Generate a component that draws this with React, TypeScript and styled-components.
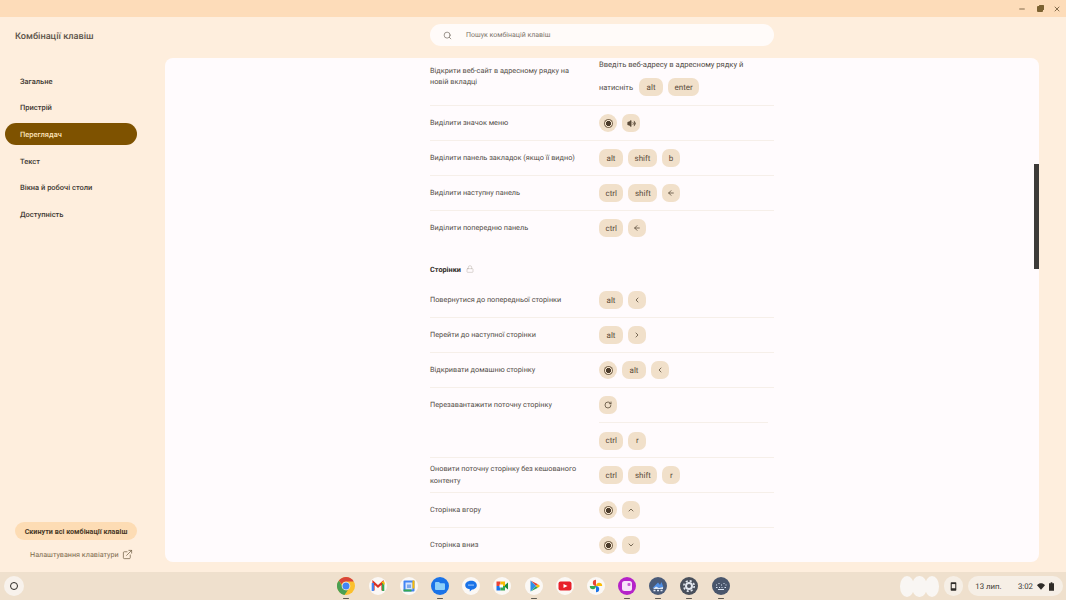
import React from "react";
import styled, { createGlobalStyle } from "styled-components";
import {
  ArrowLeft,
  ChevronDown,
  ChevronLeft,
  ChevronRight,
  ChevronUp,
  ExternalLink,
  Lock,
  RotateCw,
  Search,
  Volume2,
  Minus,
  X,
} from "lucide-react";

const GlobalStyle = createGlobalStyle`
  html, body {
    margin: 0;
    padding: 0;
    background: #feeedd;
  }
  * {
    box-sizing: border-box;
  }
`;

const Screen = styled.div`
  width: 1066px;
  height: 600px;
  display: flex;
  flex-direction: column;
  overflow: hidden;
  font-family: Roboto, "Noto Sans", sans-serif;
  text-rendering: geometricPrecision;
  color: #4d4640;
`;

const TitleBar = styled.div`
  height: 17px;
  flex: none;
  background: #fddcb9;
  display: flex;
  justify-content: flex-end;
  align-items: center;
  gap: 10.5px;
  padding: 1px 5px 0 0;
  color: #6b5536;
`;

const RestoreIcon = styled.div`
  width: 6px;
  height: 6px;
  background: #7c6231;
  border-radius: 1px;
  box-shadow: 1.5px -1.5px 0 -0.5px #7c6231;
`;

const Body = styled.div`
  flex: 1;
  min-height: 0;
  display: flex;
  background: #feeedd;
`;

const Sidebar = styled.aside`
  width: 165px;
  flex: none;
  display: flex;
  flex-direction: column;
  padding-bottom: 12px;
`;

const AppTitle = styled.h1`
  margin: 0;
  height: 38px;
  padding: 13px 0 0 15px;
  font-size: 9.2px;
  line-height: 13px;
  font-weight: 500;
  color: #5c544a;
  white-space: nowrap;
`;

const Nav = styled.nav`
  margin-top: 15px;
  display: flex;
  flex-direction: column;
  gap: 4.7px;
  flex: 1;
  padding-left: 4.5px;
`;

const NavItem = styled.div<{ $active?: boolean }>`
  height: 22px;
  display: flex;
  align-items: center;
  padding-left: 15.5px;
  border-radius: 11px;
  font-size: 7.5px;
  font-weight: 500;
  width: 132px;
  color: ${(props) => (props.$active ? "#fde3b8" : "#3f3a34")};
  background: ${(props) => (props.$active ? "#7e5200" : "transparent")};
`;

const ResetButton = styled.button`
  width: 122px;
  height: 18px;
  margin-left: 15px;
  border: none;
  border-radius: 9px;
  background: #fddcb4;
  font-family: inherit;
  font-size: 7.2px;
  font-weight: 700;
  color: #4a3a28;
  padding: 0;
  white-space: nowrap;
`;

const SettingsLink = styled.div`
  margin-top: 8px;
  margin-left: 30px;
  height: 12px;
  display: flex;
  align-items: center;
  gap: 3px;
  font-size: 7.2px;
  color: #7c6a4c;
  white-space: nowrap;

  svg {
    flex: none;
  }
`;

const Main = styled.main`
  flex: 1;
  min-width: 0;
  display: flex;
  flex-direction: column;
  padding: 0 27px 10px 0;
`;

const SearchRow = styled.div`
  height: 41px;
  flex: none;
  padding: 7px 0 0 265px;
`;

const SearchBox = styled.div`
  width: 344px;
  height: 22px;
  border-radius: 11px;
  background: #fffbf9;
  display: flex;
  align-items: center;
  padding-left: 13px;
  gap: 14px;
  font-size: 7px;
  color: #7d756c;
`;

const Card = styled.section`
  flex: 1;
  min-height: 0;
  position: relative;
  background: #fffbfd;
  border-radius: 8px;
  overflow: hidden;
  padding-left: 265px;
`;

const Content = styled.div`
  width: 344px;
  display: flex;
  flex-direction: column;
`;

const Row = styled.div<{ $height?: number; $noBorder?: boolean }>`
  display: grid;
  grid-template-columns: 169px 1fr;
  align-items: center;
  height: ${(props) => props.$height ?? 35}px;
  border-bottom: 1px solid ${(props) => (props.$noBorder ? "transparent" : "#f6efe9")};
`;

const Label = styled.div`
  font-size: 7.3px;
  line-height: 11.5px;
  color: #524c46;
  margin-top: -1px;
`;

const TopLabel = styled(Label)`
  align-self: start;
  margin-top: 6.5px;
  padding-right: 20px;
`;

const Keys = styled.div`
  display: flex;
  align-items: center;
  gap: 5px;
  font-size: 7.5px;
  color: #524c46;
`;

const Stack = styled.div`
  align-self: start;
  padding-top: 0.5px;
  display: flex;
  flex-direction: column;
  gap: 8.5px;
`;

const Note = styled.div`
  font-size: 7.6px;
  line-height: 11px;
  color: #524c46;
  white-space: nowrap;
`;

const Prompt = styled.span`
  margin-right: 1px;
`;

const Key = styled.span<{ $square?: boolean; $round?: boolean }>`
  min-width: ${(props) => (props.$square ? 18 : 24)}px;
  height: 18px;
  padding: 0 ${(props) => (props.$square ? 0 : 6.5)}px;
  border-radius: ${(props) => (props.$round ? 9 : 7)}px;
  background: #f1e0ca;
  color: #5b4c3a;
  font-size: 8px;
  display: inline-flex;
  align-items: center;
  justify-content: center;
`;

const SectionTitle = styled.h2`
  margin: 0;
  height: 37px;
  display: flex;
  align-items: center;
  gap: 5px;
  padding-top: 9px;
  font-size: 7.3px;
  font-weight: 700;
  color: #2f2b27;
`;

const PairedKeys = styled.div`
  display: grid;
  grid-template-columns: 169px 1fr;
  height: 70px;
  border-bottom: 1px solid #f6efe9;
`;

const PairedCell = styled.div`
  display: flex;
  flex-direction: column;
`;

const PairedLine = styled.div<{ $divider?: boolean }>`
  height: 35px;
  margin-right: 6px;
  display: flex;
  align-items: center;
  border-bottom: ${(props) => (props.$divider ? "1px solid #f6efe9" : "none")};
`;

const PairedLabel = styled(Label)`
  height: 35px;
  display: flex;
  align-items: center;
`;

const ScrollThumb = styled.div`
  position: absolute;
  top: 106px;
  right: 0;
  width: 5px;
  height: 105px;
  background: #3c3a38;
`;

const Shelf = styled.footer`
  height: 28px;
  flex: none;
  background: #efe0cd;
  display: grid;
  grid-template-columns: 1fr auto 1fr;
  align-items: center;
  padding: 0 3px 0 4px;
`;

const Launcher = styled.div`
  width: 20px;
  height: 20px;
  border-radius: 50%;
  background: #f8f2ec;
  display: flex;
  align-items: center;
  justify-content: center;
`;

const LauncherRing = styled.div`
  width: 8px;
  height: 8px;
  border-radius: 50%;
  border: 1.5px solid #2d2a26;
`;

const Dock = styled.div`
  display: flex;
  gap: 13.2px;
`;

const DockSlot = styled.div<{ $running?: boolean }>`
  position: relative;
  width: 18px;
  height: 18px;
  &::after {
    content: "";
    display: ${(props) => (props.$running ? "block" : "none")};
    position: absolute;
    left: 6px;
    bottom: -4px;
    width: 6px;
    height: 1.5px;
    border-radius: 1px;
    background: #5f5a53;
  }
`;

const Tray = styled.div`
  justify-self: end;
  display: flex;
  align-items: center;
`;

const PodBlob = styled.div`
  display: flex;
  width: 37px;
  margin-right: 6px;
`;

const PodLobe = styled.span`
  flex: 1;
  height: 21px;
  margin: 0 -1px;
  border-radius: 50%;
  background: #f9f6f3;
`;

const TrayPill = styled.div`
  height: 20px;
  border-radius: 10px;
  background: #f6efe6;
  display: flex;
  align-items: center;
  justify-content: center;
  font-size: 7.8px;
  color: #3b3733;
`;

const PhonePill = styled(TrayPill)`
  width: 19px;
  margin-right: 5px;
`;

const DatePill = styled(TrayPill)`
  width: 41px;
  border-radius: 10px 0 0 10px;
`;

const TimePill = styled(TrayPill)`
  width: 54px;
  gap: 4px;
  border-radius: 0 10px 10px 0;
`;

const CircleMark = styled.span`
  width: 9px;
  height: 9px;
  border-radius: 50%;
  background: radial-gradient(circle, #4b3b2a 0 2.4px, #f1e0ca 2.8px 3.3px, #7d6a52 3.7px 4.5px);
`;

const ic = { size: 8, strokeWidth: 2.4, color: "#5b4c3a" };

const navItems = ["Загальне", "Пристрій", "Переглядач", "Текст", "Вікна й робочі столи", "Доступність"];

const K = ({ children }: { children: string }) => <Key>{children}</Key>;
const S = ({ children }: { children: React.ReactNode }) => <Key $square>{children}</Key>;
const Launch = () => (
  <Key $square $round>
    <CircleMark />
  </Key>
);

const Chrome = () => (
  <svg viewBox="0 0 18 18" width="18" height="18">
    <circle cx="9" cy="9" r="9" fill="#fbc02d" />
    <path d="M9 0a9 9 0 0 1 7.800 4.500H9a4.500 4.500 0 0 0-4.300 3L1.900 3.500A9 9 0 0 1 9 0z" fill="#d9453a" />
    <path d="M9 18A9 9 0 0 1 1.900 3.500l3.900 6.800a4.500 4.500 0 0 0 5 2.900L7.500 18z" fill="#4a9f52" />
    <circle cx="9" cy="9" r="4.300" fill="#f3eee8" />
    <circle cx="9" cy="9" r="3.500" fill="#4285f4" />
  </svg>
);

const Gmail = () => (
  <svg viewBox="0 0 18 18" width="18" height="18">
    <circle cx="9" cy="9" r="9" fill="#fbf8f5" />
    <path d="M4.500 13.500V5.500L9 9.500l4.500-4V13.500" fill="none" stroke="#d93025" strokeWidth="2.200" />
    <path d="M3.800 14V6" stroke="#4285f4" strokeWidth="2.200" />
    <path d="M14.200 14V6" stroke="#34a853" strokeWidth="2.200" />
    <path d="M12.800 5.200l2 .3v2" stroke="#fbbc04" strokeWidth="1.500" fill="none" />
  </svg>
);

const Calendar = () => (
  <svg viewBox="0 0 18 18" width="18" height="18">
    <circle cx="9" cy="9" r="9" fill="#fbf8f5" />
    <rect x="3.500" y="3.500" width="11" height="11" rx="1" fill="#4285f4" />
    <rect x="5.500" y="5.500" width="7" height="7" fill="#d5e4fb" />
    <rect x="12.500" y="3.500" width="2" height="8" fill="#fbbc04" />
    <rect x="3.500" y="12.500" width="8" height="2" fill="#34a853" />
    <rect x="7" y="7.500" width="4" height="3.500" fill="#7ea9ee" />
  </svg>
);

const Files = () => (
  <svg viewBox="0 0 18 18" width="18" height="18">
    <circle cx="9" cy="9" r="9" fill="#1a73e8" />
    <path d="M4 6a1 1 0 0 1 1-1h3l1.200 1.300H13a1 1 0 0 1 1 1V12a1 1 0 0 1-1 1H5a1 1 0 0 1-1-1z" fill="#8ed0f9" />
  </svg>
);

const Messages = () => (
  <svg viewBox="0 0 18 18" width="18" height="18">
    <circle cx="9" cy="9" r="9" fill="#fbf8f5" />
    <path d="M9 3.800c3.500 0 5.800 2 5.800 4.500S12.500 12.500 10 12.500L7.800 14.500V12.300C5 12 3.200 10.500 3.200 8.300S5.500 3.800 9 3.800z" fill="#1a73e8" />
    <rect x="6" y="7.500" width="6" height="1.200" fill="#8fbcf5" />
  </svg>
);

const Meet = () => (
  <svg viewBox="0 0 18 18" width="18" height="18">
    <circle cx="9" cy="9" r="9" fill="#fbf8f5" />
    <rect x="3.500" y="4.500" width="4" height="4.500" fill="#ea4335" />
    <rect x="3.500" y="9" width="4" height="4.500" fill="#1a73e8" />
    <rect x="7.500" y="4.500" width="4.500" height="4.500" fill="#fbbc04" />
    <rect x="7.500" y="9" width="4.500" height="4.500" fill="#34a853" />
    <path d="M12 8l3-2.400v6.800L12 10z" fill="#1c8a3c" />
    <rect x="6.500" y="7.500" width="3.500" height="3" fill="#fff" />
  </svg>
);

const Play = () => (
  <svg viewBox="0 0 18 18" width="18" height="18">
    <circle cx="9" cy="9" r="9" fill="#fbf8f5" />
    <path d="M5.500 3.500l5.500 5.500 2-1.700z" fill="#ea4335" />
    <path d="M5.500 14.500l5.500-5.500 2 1.700z" fill="#34a853" />
    <path d="M11 9l2-1.700L15 9l-2 1.700z" fill="#fbbc04" />
    <path d="M5.500 3.500L11 9l-5.500 5.500z" fill="#2f8fe6" />
  </svg>
);

const YouTube = () => (
  <svg viewBox="0 0 18 18" width="18" height="18">
    <circle cx="9" cy="9" r="9" fill="#fbf8f5" />
    <rect x="2.500" y="4.500" width="13" height="9" rx="2" fill="#e8202a" />
    <path d="M7.500 7L11.500 9l-4 2z" fill="#fff" />
  </svg>
);

const Photos = () => (
  <svg viewBox="0 0 18 18" width="18" height="18">
    <circle cx="9" cy="9" r="9" fill="#fbf8f5" />
    <path d="M9 9V2.800a3.200 3.200 0 0 0-3.200 3.200C5.800 7.800 7.300 9 9 9z" fill="#ea4335" />
    <path d="M9 9h6.200A3.200 3.200 0 0 0 12 5.800C10.200 5.800 9 7.300 9 9z" fill="#fbbc04" />
    <path d="M9 9v6.200A3.200 3.200 0 0 0 12.200 12C12.200 10.200 10.700 9 9 9z" fill="#1a73e8" />
    <path d="M9 9H2.800A3.200 3.200 0 0 0 6 12.200C7.800 12.200 9 10.700 9 9z" fill="#34a853" />
  </svg>
);

const Canvas = () => (
  <svg viewBox="0 0 18 18" width="18" height="18">
    <circle cx="9" cy="9" r="9" fill="#b522c9" />
    <rect x="4" y="4" width="10" height="10" rx="2.500" fill="#f7e3fa" />
    <rect x="9.500" y="6" width="3" height="3" rx="1" fill="#c75bd6" />
  </svg>
);

const Wallpaper = () => (
  <svg viewBox="0 0 18 18" width="18" height="18">
    <circle cx="9" cy="9" r="9" fill="#4a5b78" />
    <path d="M3.500 11L9 5.500l2 2.500 1.500-3 2 5.500z" fill="#4f8fe6" />
    <path d="M4.500 13.500h2M8 13.500h2M11.500 13.500h2" stroke="#dfe8f5" strokeWidth="1.400" />
    <path d="M4 12l3-2.500 3 1.500 4-1v2z" fill="#dfe8f5" />
  </svg>
);

const Settings = () => (
  <svg viewBox="0 0 18 18" width="18" height="18">
    <circle cx="9" cy="9" r="9" fill="#49505c" />
    <circle cx="9" cy="9" r="3" fill="none" stroke="#e3e8f0" strokeWidth="2" />
    <circle cx="9" cy="9" r="5.200" fill="none" stroke="#e3e8f0" strokeWidth="1.600" strokeDasharray="2.100 2" />
  </svg>
);

const Shortcuts = () => (
  <svg viewBox="0 0 18 18" width="18" height="18">
    <circle cx="9" cy="9" r="9" fill="#49566c" />
    <path d="M4 8h1M6.500 6.500h1M9 8h1M11.500 6.500h1M13.500 8h1M4 10.500h1.500M7 10.500h1M9.500 10.500h1M12.500 10.500h1.500M6 12.500h6" stroke="#dbe6f5" strokeWidth="1.100" />
  </svg>
);

const dock: { icon: React.ReactNode; running?: boolean }[] = [
  { icon: <Chrome />, running: true },
  { icon: <Gmail /> },
  { icon: <Calendar /> },
  { icon: <Files />, running: true },
  { icon: <Messages /> },
  { icon: <Meet /> },
  { icon: <Play />, running: true },
  { icon: <YouTube /> },
  { icon: <Photos /> },
  { icon: <Canvas />, running: true },
  { icon: <Wallpaper />, running: true },
  { icon: <Settings />, running: true },
  { icon: <Shortcuts />, running: true },
];

export default function App() {
  return (
    <Screen>
      <GlobalStyle />
      <TitleBar>
        <Minus size={8} strokeWidth={2.5} />
        <RestoreIcon />
        <X size={8} strokeWidth={2.5} />
      </TitleBar>
      <Body>
        <Sidebar>
          <AppTitle>Комбінації клавіш</AppTitle>
          <Nav>
            {navItems.map((item) => (
              <NavItem key={item} $active={item === "Переглядач"}>
                {item}
              </NavItem>
            ))}
          </Nav>
          <ResetButton>Скинути всі комбінації клавіш</ResetButton>
          <SettingsLink>
            Налаштування клавіатури
            <ExternalLink size={11} strokeWidth={1.6} color="#6f5f45" />
          </SettingsLink>
        </Sidebar>
        <Main>
          <SearchRow>
            <SearchBox>
              <Search size={9} color="#7d756c" />
              Пошук комбінацій клавіш
            </SearchBox>
          </SearchRow>
          <Card>
            <Content>
              <Row $height={48}>
                <TopLabel>Відкрити веб-сайт в адресному рядку на новій вкладці</TopLabel>
                <Stack>
                  <Note>Введіть веб-адресу в адресному рядку й</Note>
                  <Keys>
                    <Prompt>натисніть</Prompt>
                    <K>alt</K>
                    <K>enter</K>
                  </Keys>
                </Stack>
              </Row>
              <Row>
                <Label>Виділити значок меню</Label>
                <Keys>
                  <Launch />
                  <S>
                    <Volume2 size={9} strokeWidth={1.8} color="#5b4c3a" fill="#5b4c3a" />
                  </S>
                </Keys>
              </Row>
              <Row>
                <Label>Виділити панель закладок (якщо її видно)</Label>
                <Keys>
                  <K>alt</K>
                  <K>shift</K>
                  <S>b</S>
                </Keys>
              </Row>
              <Row>
                <Label>Виділити наступну панель</Label>
                <Keys>
                  <K>ctrl</K>
                  <K>shift</K>
                  <S>
                    <ArrowLeft {...ic} />
                  </S>
                </Keys>
              </Row>
              <Row $noBorder>
                <Label>Виділити попередню панель</Label>
                <Keys>
                  <K>ctrl</K>
                  <S>
                    <ArrowLeft {...ic} />
                  </S>
                </Keys>
              </Row>
              <SectionTitle>
                Сторінки
                <Lock size={8} strokeWidth={1.2} color="#a89f94" />
              </SectionTitle>
              <Row>
                <Label>Повернутися до попередньої сторінки</Label>
                <Keys>
                  <K>alt</K>
                  <S>
                    <ChevronLeft {...ic} />
                  </S>
                </Keys>
              </Row>
              <Row>
                <Label>Перейти до наступної сторінки</Label>
                <Keys>
                  <K>alt</K>
                  <S>
                    <ChevronRight {...ic} />
                  </S>
                </Keys>
              </Row>
              <Row>
                <Label>Відкривати домашню сторінку</Label>
                <Keys>
                  <Launch />
                  <K>alt</K>
                  <S>
                    <ChevronLeft {...ic} />
                  </S>
                </Keys>
              </Row>
              <PairedKeys>
                <PairedLabel>Перезавантажити поточну сторінку</PairedLabel>
                <PairedCell>
                  <PairedLine $divider>
                    <Keys>
                      <S>
                        <RotateCw {...ic} />
                      </S>
                    </Keys>
                  </PairedLine>
                  <PairedLine>
                    <Keys>
                      <K>ctrl</K>
                      <S>r</S>
                    </Keys>
                  </PairedLine>
                </PairedCell>
              </PairedKeys>
              <Row>
                <Label>Оновити поточну сторінку без кешованого контенту</Label>
                <Keys>
                  <K>ctrl</K>
                  <K>shift</K>
                  <S>r</S>
                </Keys>
              </Row>
              <Row>
                <Label>Сторінка вгору</Label>
                <Keys>
                  <Launch />
                  <S>
                    <ChevronUp {...ic} />
                  </S>
                </Keys>
              </Row>
              <Row $noBorder>
                <Label>Сторінка вниз</Label>
                <Keys>
                  <Launch />
                  <S>
                    <ChevronDown {...ic} />
                  </S>
                </Keys>
              </Row>
            </Content>
            <ScrollThumb />
          </Card>
        </Main>
      </Body>
      <Shelf>
        <Launcher>
          <LauncherRing />
        </Launcher>
        <Dock>
          {dock.map((app, index) => (
            <DockSlot key={index} $running={app.running}>
              {app.icon}
            </DockSlot>
          ))}
        </Dock>
        <Tray>
          <PodBlob>
            <PodLobe />
            <PodLobe />
            <PodLobe />
          </PodBlob>
          <PhonePill>
            <svg viewBox="0 0 10 12" width="7" height="9">
              <rect width="8" height="12" x="1" rx="1" fill="#2f2c28" />
              <rect width="5" height="6" x="2.500" y="2.500" fill="#f6efe6" />
            </svg>
          </PhonePill>
          <DatePill>13 лип.</DatePill>
          <TimePill>
            3:02
            <svg viewBox="0 0 10 8" width="8" height="7">
              <path d="M0 2.500C3-.8 7-.8 10 2.500L5 8z" fill="#2f2c28" />
            </svg>
            <svg viewBox="0 0 6 10" width="5" height="9">
              <path d="M2 0h2v1h2v9H0V1h2z" fill="#2f2c28" />
            </svg>
          </TimePill>
        </Tray>
      </Shelf>
    </Screen>
  );
}
